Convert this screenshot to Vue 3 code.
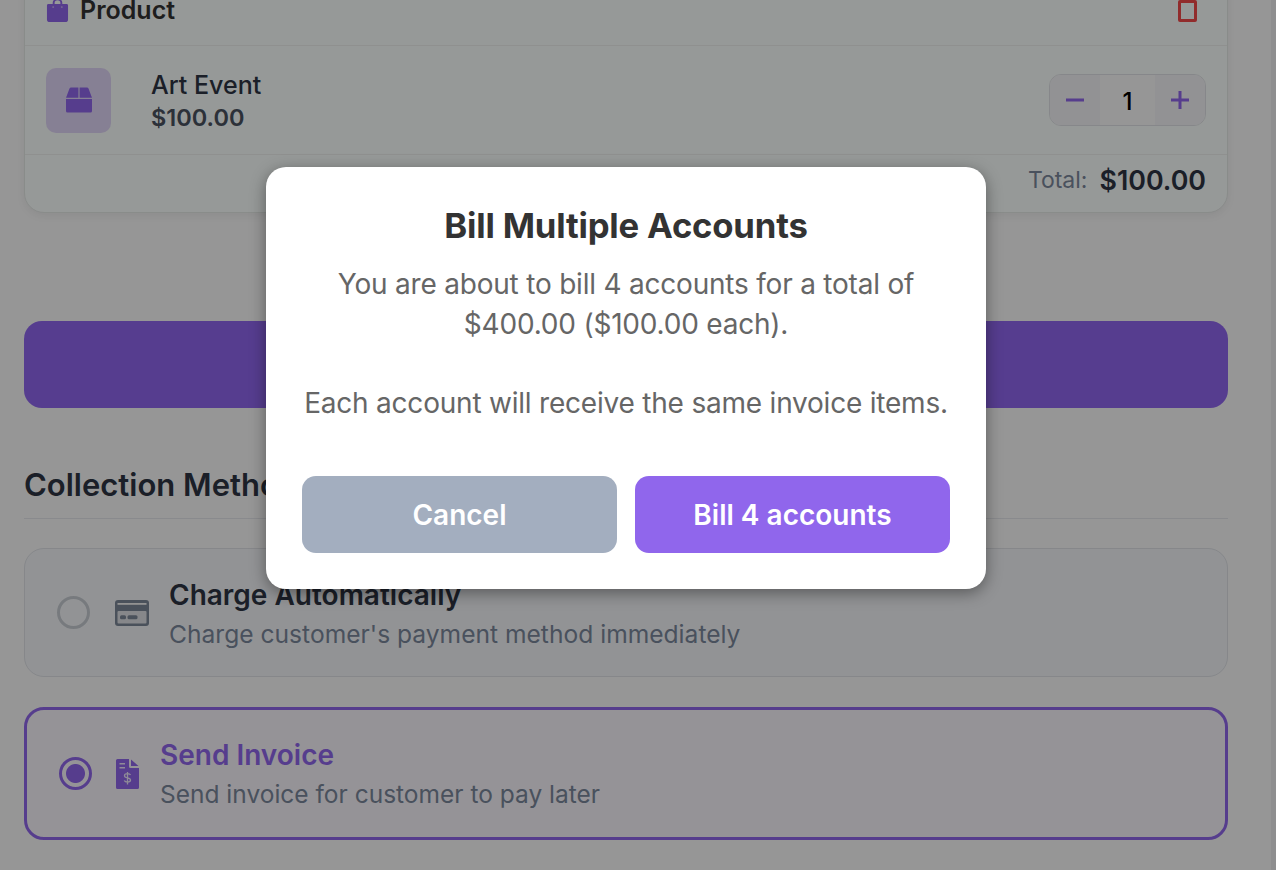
<script setup>
const options = [
  { id: 'auto', title: 'Charge Automatically', sub: "Charge customer's payment method immediately", selected: false },
  { id: 'invoice', title: 'Send Invoice', sub: 'Send invoice for customer to pay later', selected: true },
]
</script>

<template>
  <div class="page">
    <section class="product-card">
      <header class="product-head">
        <div class="product-label">
          <svg class="bag" viewBox="0 0 24 28" preserveAspectRatio="none" aria-hidden="true">
            <path fill="#9066ec" d="M2.500 7H7V5.500a5 5 0 0 1 10 0V7h4.500c.8 0 1.500.7 1.500 1.500V25a3 3 0 0 1-3 3H4a3 3 0 0 1-3-3V8.500C1 7.700 1.700 7 2.500 7Zm6.500 0h6V5.500a3 3 0 0 0-6 0V7Z" />
            <circle cx="7.500" cy="10.500" r="1" fill="#cdbcf5" />
            <circle cx="16.500" cy="10.500" r="1" fill="#cdbcf5" />
          </svg>
          <span>Product</span>
        </div>
        <span class="trash"></span>
      </header>
      <div class="product-row">
        <div class="thumb">
          <svg class="box" viewBox="0 0 26 26" width="26" height="26" aria-hidden="true">
            <path fill="#9066ec" d="M0 12h26v12a1.500 1.500 0 0 1-1.500 1.500h-23A1.500 1.500 0 0 1 0 24V12Zm0-1.200L3.500 1.500A2 2 0 0 1 5 .500h7.400v10.300H0Zm13.600-10.300H21a2 2 0 0 1 1.500 1l3.500 9.300H13.600V.500Z" />
          </svg>
        </div>
        <div class="product-info">
          <div class="product-name">Art Event</div>
          <div class="product-price">$100.00</div>
        </div>
        <div class="stepper">
          <span class="step-btn minus"></span>
          <span class="step-val">1</span>
          <span class="step-btn plus"></span>
        </div>
      </div>
      <footer class="product-foot">
        <span class="total-label">Total:</span>
        <span class="total-value">$100.00</span>
      </footer>
    </section>

    <div class="primary-bar"></div>

    <h2 class="section-title">Collection Method</h2>

    <div class="options">
      <div
        v-for="opt in options"
        :key="opt.id"
        class="option"
        :class="{ selected: opt.selected }"
      >
        <span class="radio"></span>
        <svg v-if="opt.id === 'auto'" class="card-icon" viewBox="0 0 34 26" aria-hidden="true">
          <rect width="34" height="26" rx="3" fill="#7c8798" />
          <rect x="2.500" y="3" width="29" height="1.800" fill="#f4f4f4" />
          <rect x="2.500" y="11" width="29" height="12.500" rx="1" fill="#dfe2e6" />
          <rect x="5" y="15.300" width="6" height="4" rx="1.500" fill="#7c8798" />
          <rect x="12.500" y="15.300" width="10" height="4" rx="1.500" fill="#7c8798" />
        </svg>
        <svg v-else class="doc-icon" viewBox="0 0 23 30" aria-hidden="true">
          <path fill="#9066ec" d="M1.500 0H13v7.500A1.500 1.500 0 0 0 14.500 9H23v19.500a1.500 1.500 0 0 1-1.500 1.500h-20A1.500 1.500 0 0 1 0 28.500v-27A1.500 1.500 0 0 1 1.500 0ZM15 .500 22.500 7H15V.500Z" />
          <path fill="#eee8fc" d="M3.500 4H9v1.500H3.500zM3.500 8H9v1.500H3.500z" />
          <path fill="none" stroke="#eee8fc" stroke-width="1.300" d="M14.500 16c-.5-1-1.500-1.300-3-1.300-1.700 0-3 .7-3 2s1.300 1.800 3 2.200 3 .9 3 2.200-1.300 2-3 2c-1.500 0-2.700-.4-3.200-1.500M11.500 13v12.500" />
        </svg>
        <div class="option-text">
          <div class="option-title">{{ opt.title }}</div>
          <div class="option-sub">{{ opt.sub }}</div>
        </div>
      </div>
    </div>

    <div class="scroll-track"></div>

    <div class="overlay">
      <div class="modal">
        <h3 class="modal-title">Bill Multiple Accounts</h3>
        <div class="modal-body">
          <p>You are about to bill 4 accounts for a total of<br>$400.00 ($100.00 each).</p>
          <p>Each account will receive the same invoice items.</p>
        </div>
        <div class="modal-actions">
          <button class="btn cancel">Cancel</button>
          <button class="btn confirm">Bill 4 accounts</button>
        </div>
      </div>
    </div>
  </div>
</template>

<style>
html, body {
  margin: 0;
  height: 100%;
  overflow: hidden;
  background: #fafafa;
}
</style>

<style scoped>
.page {
  position: relative;
  height: 870px;
  overflow: hidden;
  padding: 0 48px 0 24px;
  box-sizing: border-box;
  font-family: Inter, "Liberation Sans", sans-serif;
  background: #fafafa;
}

.scroll-track {
  position: absolute;
  top: 0;
  right: 0;
  bottom: 0;
  width: 5px;
  background: #ededef;
}

.product-card {
  width: 1204px;
  height: 253px;
  margin-top: -40px;
  box-sizing: border-box;
  background: #fbfffd;
  border: 1px solid #e5e9e7;
  border-radius: 20px;
  box-shadow: 0 3px 8px rgba(0, 0, 0, 0.06);
  display: flex;
  flex-direction: column;
}

.product-head {
  height: 85px;
  padding: 0 30px 23px 21px;
  box-sizing: border-box;
  border-bottom: 1px solid #eef0ef;
  display: flex;
  align-items: flex-end;
  justify-content: space-between;
}

.product-label {
  display: flex;
  align-items: center;
  gap: 11px;
  font-size: 25px;
  font-weight: 600;
  color: #333;
  line-height: 20px;
}

.bag {
  width: 23px;
  height: 24px;
}

.trash {
  width: 19px;
  height: 22px;
  box-sizing: border-box;
  border: 3px solid #f24a4a;
  border-radius: 2px;
}

.product-row {
  height: 109px;
  padding: 1px 21px 0;
  box-sizing: border-box;
  border-bottom: 1px solid #eef0ef;
  display: flex;
  align-items: center;
}

.thumb {
  width: 65px;
  height: 65px;
  border-radius: 10px;
  background: #e0d6f7;
  display: flex;
  align-items: center;
  justify-content: center;
}

.box {
  margin: 0 0 2px 1px;
}

.product-info {
  margin: 2px 0 0 40px;
  flex: 1;
}

.product-name {
  font-size: 25px;
  font-weight: 500;
  color: #2e3543;
  line-height: 32px;
}

.product-price {
  margin-top: 1px;
  font-size: 23.500px;
  font-weight: 600;
  color: #4a5260;
  line-height: 32px;
}

.stepper {
  width: 157px;
  height: 52px;
  margin-top: -1px;
  box-sizing: border-box;
  border: 1px solid #e0e2e6;
  border-radius: 12px;
  display: flex;
  overflow: hidden;
}

.step-btn {
  width: 50px;
  background: #f3f3f7;
  position: relative;
}

.step-btn::before,
.step-btn.plus::after {
  content: "";
  position: absolute;
  background: #9066ec;
  left: 50%;
  top: 50%;
  width: 18px;
  height: 3px;
  transform: translate(-50%, -50%);
}

.step-btn.plus::after {
  width: 3px;
  height: 18px;
}

.step-val {
  flex: 1;
  text-align: center;
  line-height: 53px;
  font-size: 24px;
  font-weight: 500;
  color: #000;
  background: #fbfbfb;
}

.product-foot {
  flex: 1;
  padding: 0 21px 7px;
  display: flex;
  align-items: center;
  justify-content: flex-end;
  gap: 12px;
}

.total-label {
  font-size: 23px;
  color: #7b879b;
}

.total-value {
  font-size: 26.800px;
  font-weight: 600;
  color: #2e3543;
}

.primary-bar {
  width: 1204px;
  height: 87px;
  margin-top: 108px;
  border-radius: 18px;
  background: #8f66ee;
}

.section-title {
  width: 1204px;
  margin: 57px 0 0;
  height: 54px;
  box-sizing: border-box;
  border-bottom: 1px solid #e5e7eb;
  font-size: 31px;
  font-weight: 600;
  line-height: 40px;
  color: #2e3543;
}

.options {
  width: 1204px;
  margin-top: 29px;
  display: flex;
  flex-direction: column;
  gap: 30px;
}

.option {
  height: 129px;
  box-sizing: border-box;
  padding: 0 32px;
  background: #f4f6f9;
  border: 1px solid #dfe2e7;
  border-radius: 20px;
  display: flex;
  align-items: center;
}

.option.selected {
  height: 133px;
  background: #f9f6fc;
  border: 3px solid #9066ec;
}

.radio {
  width: 33px;
  height: 33px;
  box-sizing: border-box;
  border: 3px solid #c7ccd2;
  border-radius: 50%;
  flex: none;
}

.selected .radio {
  border-color: #9066ec;
  background: radial-gradient(circle, #9066ec 0 9px, transparent 10px);
}

.card-icon {
  width: 34px;
  height: 26px;
  flex: none;
  margin-left: 25px;
}

.doc-icon {
  width: 23px;
  height: 30px;
  flex: none;
  margin-left: 24px;
}

.option-text {
  margin: 5px 0 0 21px;
}

.selected .option-text {
  margin-top: 2px;
}

.card-icon + .option-text {
  margin-left: 20px;
}

.option-title {
  font-size: 28px;
  font-weight: 600;
  color: #2e3543;
  line-height: 39px;
}

.selected .option-title {
  color: #9066ec;
}

.option-sub {
  font-size: 24.600px;
  color: #7b879b;
  line-height: 39px;
}

.selected .option-sub {
  font-size: 24.500px;
  line-height: 38px;
}

.overlay {
  position: absolute;
  inset: 0;
  background: rgba(0, 0, 0, 0.4);
  display: flex;
  justify-content: center;
  align-items: flex-start;
  padding-top: 167px;
  padding-right: 24px;
  box-sizing: border-box;
}

.modal {
  width: 720px;
  height: 422px;
  box-sizing: border-box;
  padding: 36px;
  background: #fff;
  border-radius: 20px;
  box-shadow: 0 4px 16px rgba(0, 0, 0, 0.4);
  text-align: center;
}

.modal-title {
  margin: 0;
  font-size: 34.700px;
  font-weight: 700;
  letter-spacing: -0.2px;
  line-height: 44px;
  color: #333;
}

.modal-body {
  margin-top: 18px;
  font-size: 28px;
  letter-spacing: -0.21px;
  line-height: 39.700px;
  color: #666;
}

.modal-body p {
  margin: 0 0 39.700px;
}

.modal-actions {
  margin-top: 52px;
  display: flex;
  gap: 18px;
}

.btn {
  flex: 1;
  height: 77px;
  padding: 2px 0 0;
  border: 0;
  border-radius: 14px;
  font-family: inherit;
  font-size: 28px;
  font-weight: 600;
  color: #fff;
}

.cancel {
  background: #a3aebf;
}

.confirm {
  background: #9066ec;
}
</style>
